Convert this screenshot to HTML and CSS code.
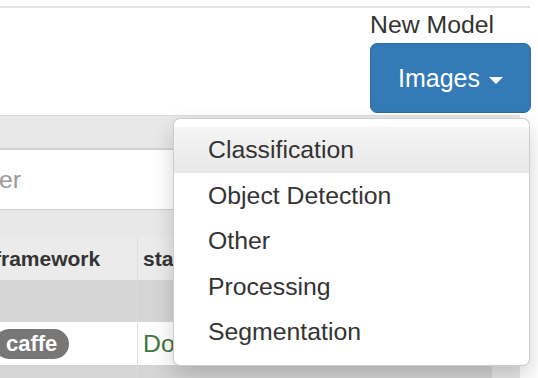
FILE: index.html
```html
<!DOCTYPE html>
<html lang="en">
<head>
    <meta charset="UTF-8">
    <title>Models</title>
    <link rel="stylesheet" href="styles.css">
</head>
<body>
    <div class="topbar"></div>
    <div class="header">
        <div class="new-model">
            <div class="new-model-label">New Model</div>
            <div class="btn-group">
                <button class="btn-primary">Images <span class="caret"></span></button>
                <ul class="dropdown-menu">
                    <li class="active">Classification</li>
                    <li>Object Detection</li>
                    <li>Other</li>
                    <li>Processing</li>
                    <li>Segmentation</li>
                </ul>
            </div>
        </div>
    </div>
    <div class="panel">
        <div class="filter"><span class="placeholder">Filter</span></div>
        <table class="models">
            <tr class="head-row">
                <th class="col-framework">framework</th>
                <th>status</th>
            </tr>
            <tr class="group-row">
                <td class="col-framework"></td>
                <td></td>
            </tr>
            <tr class="model-row">
                <td class="col-framework"><span class="badge">caffe</span></td>
                <td class="status-done">Done</td>
            </tr>
            <tr class="group-row">
                <td class="col-framework"></td>
                <td></td>
            </tr>
        </table>
    </div>
</body>
</html>
```

FILE: styles.css
```css
body {
    margin: 0;
    padding: 0;
    width: 538px;
    height: 378px;
    overflow: hidden;
    background: #fff;
    font-family: "Liberation Sans", Arial, sans-serif;
    color: #333;
}
.topbar {
    width: 530px;
    height: 6px;
    border-bottom: 2px solid #e3e3e3;
}
.header {
    display: flex;
    justify-content: flex-end;
    padding-right: 7px;
    padding-top: 3px;
}
.new-model {
    display: flex;
    flex-direction: column;
    align-items: flex-start;
}
.new-model-label {
    font-size: 24.8px;
    line-height: 28px;
    margin-bottom: 4px;
}
.btn-group {
    position: relative;
}
.btn-primary {
    display: block;
    width: 161px;
    height: 70px;
    padding: 0;
    border: 1px solid #2e6da4;
    border-radius: 7px;
    background-color: #337ab7;
    color: #fff;
    font-family: "Liberation Sans", Arial, sans-serif;
    font-size: 25px;
    line-height: 68px;
    text-align: center;
    cursor: pointer;
}
.caret {
    display: inline-block;
    width: 0;
    height: 0;
    margin-left: 2px;
    vertical-align: middle;
    border-top: 7px solid #fff;
    border-left: 7px solid transparent;
    border-right: 7px solid transparent;
}
.dropdown-menu {
    position: absolute;
    top: 75px;
    right: 1px;
    z-index: 10;
    width: 357px;
    box-sizing: border-box;
    margin: 0;
    padding: 8px 0 10px;
    list-style: none;
    background: #fff;
    border: 1px solid rgba(0, 0, 0, .2);
    border-radius: 7px;
    box-shadow: 0 10px 21px rgba(0, 0, 0, .175);
}
.dropdown-menu li {
    padding: 5px 34px;
    font-size: 24.8px;
    line-height: 35.5px;
    color: #333;
    white-space: nowrap;
}
.dropdown-menu li.active {
    background-image: linear-gradient(to bottom, #f5f5f5 0, #e8e8e8 100%);
}
.panel {
    margin-top: 2px;
    width: 520px;
    height: 263px;
    padding-top: 32px;
    box-sizing: border-box;
    overflow: hidden;
    background: #e8e8e8;
    border-top: 1px solid #dcdcdc;
}
.filter {
    width: 230px;
    height: 62px;
    margin-left: -50px;
    padding-left: 16px;
    box-sizing: border-box;
    background: #fff;
    border-top: 2px solid #d2d2d2;
    border-bottom: 1px solid #cfcfcf;
    display: flex;
    align-items: center;
    font-size: 24.8px;
}
.placeholder {
    color: #999;
}
.models {
    margin-top: 27px;
    margin-left: -11px;
    width: 503px;
    border-collapse: collapse;
    font-size: 21px;
}
.models th, .models td {
    padding: 0 5px;
    text-align: left;
    white-space: nowrap;
}
.models .col-framework {
    width: 138px;
    border-right: 1px solid #dedede;
}
.head-row {
    height: 43px;
    background: #ebebeb;
}
.head-row th {
    font-weight: bold;
    color: #333;
}
.group-row {
    height: 42px;
    background: #d5d5d5;
}
.model-row {
    height: 43px;
    background: #fff;
    font-size: 24.8px;
}
.badge {
    display: inline-block;
    padding: 0 12px;
    height: 30px;
    line-height: 30px;
    border-radius: 15px;
    background: #777;
    color: #fff;
    font-size: 22px;
    font-weight: bold;
    vertical-align: middle;
}
.status-done {
    color: #3c763d;
}
```
